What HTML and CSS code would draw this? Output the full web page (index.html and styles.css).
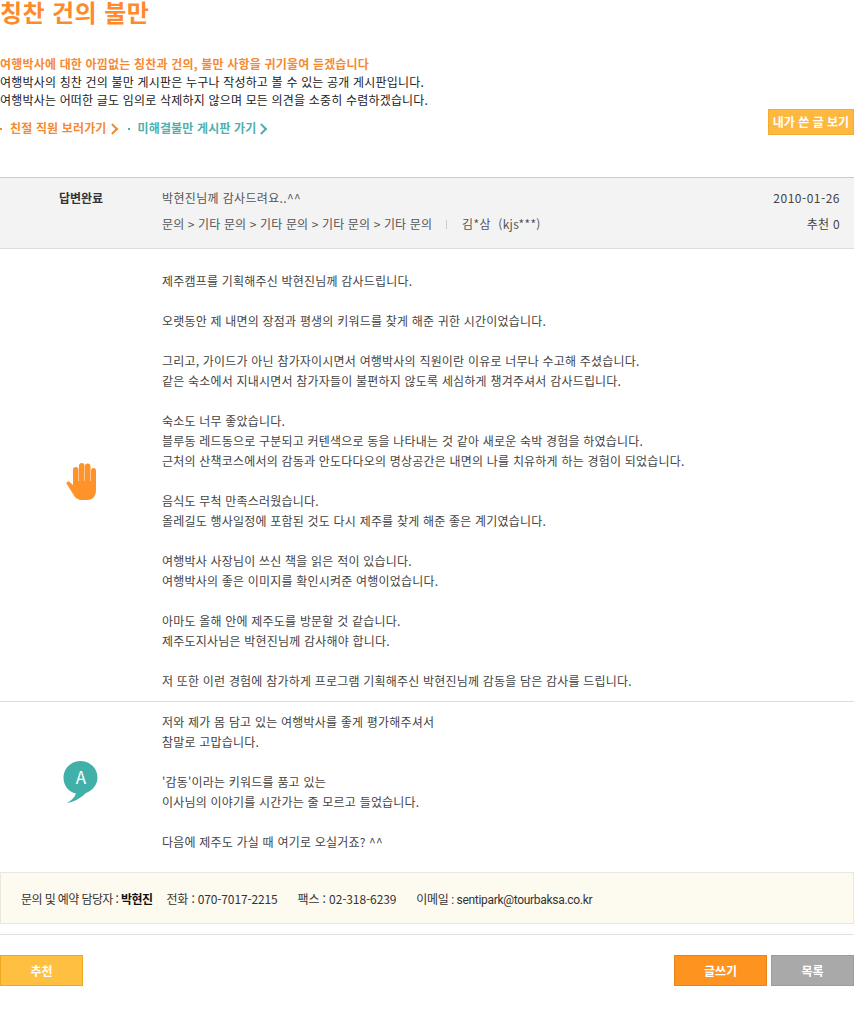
FILE: index.html
```html
<!DOCTYPE html>
<html lang="ko">
<head>
    <meta charset="UTF-8">
    <title>칭찬 건의 불만</title>
    <link rel="stylesheet" href="styles.css">
</head>
<body>
    <h2 class="page-title">칭찬 건의 불만</h2>

    <div class="intro">
        <div class="intro-text">
            <p class="intro-lead">여행박사에 대한 아낌없는 칭찬과 건의, 불만 사항을 귀기울여 듣겠습니다</p>
            <p>여행박사의 칭찬 건의 불만 게시판은 누구나 작성하고 볼 수 있는 공개 게시판입니다.</p>
            <p>여행박사는 어떠한 글도 임의로 삭제하지 않으며 모든 의견을 소중히 수렴하겠습니다.</p>
        </div>
        <div class="intro-links">
            <div class="links">
                <a class="link-orange">친절 직원 보러가기</a>
                <a class="link-teal">미해결불만 게시판 가기</a>
            </div>
            <a class="my-posts">내가 쓴 글 보기</a>
        </div>
    </div>

    <div class="post-head">
        <div class="status">답변완료</div>
        <div class="post-info">
            <div class="post-title">박현진님께 감사드려요..^^</div>
            <div class="post-meta">
                <span>문의 &gt; 기타 문의 &gt; 기타 문의 &gt; 기타 문의 &gt; 기타 문의</span>
                <span class="sep"></span>
                <span class="writer">김*삼&nbsp;&nbsp;(kjs***)</span>
            </div>
        </div>
        <div class="post-side">
            <div class="date">2010-01-26</div>
            <div class="votes">추천 0</div>
        </div>
    </div>

    <div class="question">
        <div class="side-icon">
            <svg width="30" height="37" viewBox="0 0 30 37">
                <rect fill="#ff9329" x="7" y="4" width="5.500" height="22" rx="2.700"/>
                <rect fill="#ff9329" x="13" y="0" width="5.500" height="24" rx="2.700"/>
                <rect fill="#ff9329" x="19" y="0.500" width="5.500" height="24" rx="2.700"/>
                <rect fill="#ff9329" x="25" y="5" width="5" height="20" rx="2.500"/>
                <path fill="#ff9329" d="M7 22L3.500 18.800C1.500 17.800-0.200 19.500 0.800 21L7 31C9 35 12 37 16 37H21C27 37 30 33 30 27V18H7Z"/>
            </svg>
        </div>
        <div class="post-body">
            <p>제주캠프를 기획해주신 박현진님께 감사드립니다.</p>
            <br>
            <p>오랫동안 제 내면의 장점과 평생의 키워드를 찾게 해준 귀한 시간이었습니다.</p>
            <br>
            <p>그리고, 가이드가 아닌 참가자이시면서 여행박사의 직원이란 이유로 너무나 수고해 주셨습니다.</p>
            <p>같은 숙소에서 지내시면서 참가자들이 불편하지 않도록 세심하게 챙겨주셔서 감사드립니다.</p>
            <br>
            <p>숙소도 너무 좋았습니다.</p>
            <p>블루동 레드동으로 구분되고 커텐색으로 동을 나타내는 것 같아 새로운 숙박 경험을 하였습니다.</p>
            <p>근처의 산책코스에서의 감동과 안도다다오의 명상공간은 내면의 나를 치유하게 하는 경험이 되었습니다.</p>
            <br>
            <p>음식도 무척 만족스러웠습니다.</p>
            <p>올레길도 행사일정에 포함된 것도 다시 제주를 찾게 해준 좋은 계기였습니다.</p>
            <br>
            <p>여행박사 사장님이 쓰신 책을 읽은 적이 있습니다.</p>
            <p>여행박사의 좋은 이미지를 확인시켜준 여행이었습니다.</p>
            <br>
            <p>아마도 올해 안에 제주도를 방문할 것 같습니다.</p>
            <p>제주도지사님은 박현진님께 감사해야 합니다.</p>
            <br>
            <p>저 또한 이런 경험에 참가하게 프로그램 기획해주신 박현진님께 감동을 담은 감사를 드립니다.</p>
        </div>
    </div>

    <div class="answer">
        <div class="side-icon">
            <svg width="36" height="44" viewBox="0 0 36 44">
                <path fill="#40b0a8" d="M17.500 1C27 1 34.500 8.500 34.500 17.500C34.500 25 29 31 23 33C18 38 11 42 4 43C9 40 12 37 13 33.500C5.500 32 0.500 25.500 0.500 17.500C0.500 8.500 8 1 17.500 1Z"/>
            </svg>
            <span class="answer-letter">A</span>
        </div>
        <div class="post-body">
            <p>저와 제가 몸 담고 있는 여행박사를 좋게 평가해주셔서</p>
            <p>참말로 고맙습니다.</p>
            <br>
            <p>'감동'이라는 키워드를 품고 있는</p>
            <p>이사님의 이야기를 시간가는 줄 모르고 들었습니다.</p>
            <br>
            <p>다음에 제주도 가실 때 여기로 오실거죠? ^^</p>
        </div>
    </div>

    <div class="contact">
        <span class="contact-name">문의 및 예약 담당자 : <b>박현진</b></span>
        <span class="contact-phone">전화 : 070-7017-2215</span>
        <span class="contact-fax">팩스 : 02-318-6239</span>
        <span class="contact-mail">이메일 : sentipark@tourbaksa.co.kr</span>
    </div>

    <div class="actions">
        <a class="btn btn-yellow">추천</a>
        <div class="actions-right">
            <a class="btn btn-orange">글쓰기</a>
            <a class="btn btn-gray">목록</a>
        </div>
    </div>
</body>
</html>
```

FILE: styles.css
```css
body {
    margin: 0;
    font-family: "Noto Sans CJK KR", "Noto Sans", sans-serif;
    font-size: 12px;
    color: #333;
    background-color: #fff;
    height: 1016px;
    overflow: hidden;
}
p {
    margin: 0;
}
.page-title {
    margin: 0;
    height: 55px;
    font-size: 24px;
    line-height: 24px;
    letter-spacing: 0.4px;
    font-weight: bold;
    color: #ff8a2b;
}

/* Intro block */
.intro {
    height: 122px;
}
.intro-text {
    line-height: 18px;
    letter-spacing: 0.18px;
    color: #222;
}
.intro-lead {
    color: #f58a33;
    font-weight: bold;
}
.intro-links {
    display: flex;
    justify-content: space-between;
}
.links {
    display: flex;
    gap: 10px;
    margin-top: 10px;
    font-weight: bold;
    line-height: 18px;
    letter-spacing: 0.15px;
}
.links a {
    position: relative;
    padding-left: 10px;
}
.links a::before {
    content: "";
    position: absolute;
    left: 0;
    top: 9px;
    width: 2px;
    height: 2px;
    background-color: currentColor;
}
.links a::after {
    content: "";
    display: inline-block;
    width: 6px;
    height: 6px;
    margin-left: 3px;
    border-top: 2px solid currentColor;
    border-right: 2px solid currentColor;
    transform: rotate(45deg) translate(-1px, 1px);
}
.link-orange {
    color: #f58a33;
}
.link-teal {
    color: #4fb0ae;
}
.my-posts {
    box-sizing: border-box;
    width: 86px;
    height: 26px;
    line-height: 24px;
    text-align: center;
    color: #fff;
    font-weight: bold;
    background-color: #ffb83f;
    border: 1px solid #f5ab2d;
}

/* Post header */
.post-head {
    display: flex;
    box-sizing: border-box;
    height: 72px;
    background-color: #f3f3f3;
    border-top: 1px solid #ccc;
    border-bottom: 1px solid #ddd;
}
.status {
    width: 162px;
    padding: 11px 0 0 59px;
    box-sizing: border-box;
    font-weight: bold;
    line-height: 18px;
}
.post-info {
    flex: 1;
    color: #555;
    padding-top: 11px;
    line-height: 18px;
    letter-spacing: 0.13px;
}
.post-title {
    letter-spacing: 0.35px;
}
.post-meta {
    display: flex;
    align-items: center;
    margin-top: 8px;
}
.post-meta .sep {
    width: 1px;
    height: 9px;
    margin: 0 15px 0 14px;
    background-color: #ccc;
}
.writer {
    letter-spacing: 0.35px;
}
.post-side {
    padding: 11px 14px 0 0;
    text-align: right;
    line-height: 18px;
    color: #444;
}
.date {
    letter-spacing: 0.5px;
}
.votes {
    margin-top: 8px;
    letter-spacing: 0.3px;
}

/* Question and answer */
.question,
.answer {
    display: flex;
    align-items: center;
    box-sizing: border-box;
}
.question {
    height: 453px;
    padding-top: 12px;
    border-bottom: 1px solid #ddd;
}
.answer {
    height: 170px;
    padding-bottom: 10px;
}
.side-icon {
    position: relative;
    display: flex;
    justify-content: center;
    width: 162px;
    box-sizing: border-box;
    flex: none;
}
.answer-letter {
    position: absolute;
    left: 0;
    right: 0;
    top: 7px;
    text-align: center;
    color: #fff;
    font-size: 17px;
    line-height: 20px;
}
.post-body {
    line-height: 20px;
    letter-spacing: 0.2px;
    color: #444;
}

/* Contact strip */
.contact {
    display: flex;
    align-items: center;
    box-sizing: border-box;
    height: 52px;
    padding-left: 20px;
    background-color: #fdfaf0;
    border: 1px solid #e8e8e0;
    color: #333;
}
.contact b {
    color: #111;
}
.contact-name {
    letter-spacing: -0.6px;
    margin-right: 14px;
}
.contact-phone {
    letter-spacing: -0.15px;
    margin-right: 20px;
}
.contact-fax {
    letter-spacing: -0.1px;
    margin-right: 20px;
}
.contact-mail {
    font-family: Roboto, "Noto Sans CJK KR", sans-serif;
    letter-spacing: -0.3px;
}

.actions {
    display: flex;
    justify-content: space-between;
    margin-top: 10px;
    padding-top: 20px;
    border-top: 1px solid #e2e2e2;
}
.actions-right {
    display: flex;
    gap: 4px;
}
.btn {
    box-sizing: border-box;
    height: 31px;
    line-height: 29px;
    text-align: center;
    color: #fff;
    font-weight: bold;
    border: 1px solid;
}
.btn-yellow {
    width: 83px;
    background-color: #ffbf40;
    border-color: #eea820;
}
.btn-orange {
    width: 93px;
    background-color: #ff9320;
    border-color: #e8851a;
}
.btn-gray {
    width: 83px;
    background-color: #a9a9a9;
    border-color: #9c9c9c;
}
```
